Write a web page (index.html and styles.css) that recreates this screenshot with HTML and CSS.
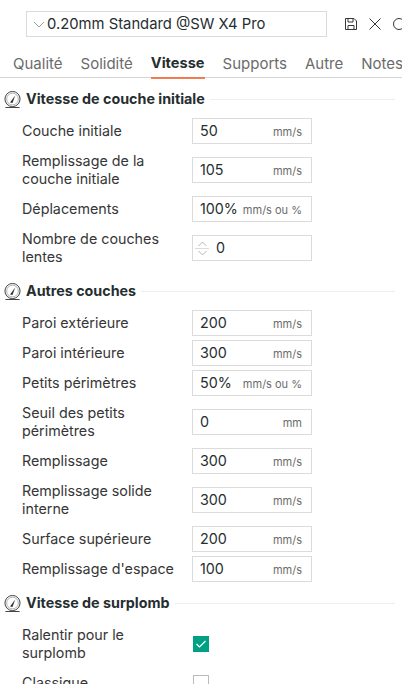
FILE: index.html
```html
<!DOCTYPE html>
<html lang="fr">
<head>
    <meta charset="UTF-8">
    <title>Vitesse</title>
    <link rel="stylesheet" href="styles.css">
</head>
<body>
    <svg class="defs" width="0" height="0">
        <symbol id="gauge" viewBox="0 0 18 18">
            <circle cx="9" cy="8.5" r="8" fill="none" stroke="#363636" stroke-width="1"/>
            <circle cx="9" cy="8.5" r="6.2" fill="none" stroke="#9a9a9a" stroke-width="0.8"/>
            <path d="M6.4 12.2 L12 4.4 L9 12.8 Z" fill="#363636"/>
            <path d="M1.5 17.5 H16.5" stroke="#363636" stroke-width="1"/>
        </symbol>
    </svg>

    <div class="topbar">
        <div class="preset">
            <svg class="chevron" width="12" height="7" viewBox="0 0 12 7"><path d="M1 1 L6 6 L11 1" fill="none" stroke="#a0a0a0"/></svg>
            <span>0.20mm Standard @SW X4 Pro</span>
        </div>
        <svg class="tool save" width="14" height="14" viewBox="0 0 14 14"><path d="M1.5 1.5 H10 L12.5 4 V12.5 H1.5 Z M4 1.5 V5 H9 V1.5 M4 12.5 V8.5 H10 V12.5" fill="none" stroke="#363636"/></svg>
        <svg class="tool" width="14" height="14" viewBox="0 0 14 14"><path d="M1.5 1.5 L12.5 12.5 M12.5 1.5 L1.5 12.5" fill="none" stroke="#363636"/></svg>
        <svg class="tool" width="14" height="14" viewBox="0 0 14 14"><circle cx="7" cy="7" r="5.5" fill="none" stroke="#363636"/></svg>
    </div>

    <div class="tabs">
        <span class="tab">Qualité</span>
        <span class="tab">Solidité</span>
        <span class="tab active">Vitesse</span>
        <span class="tab">Supports</span>
        <span class="tab">Autre</span>
        <span class="tab">Notes</span>
    </div>

    <div class="section">
        <div class="heading"><svg class="gauge"><use href="#gauge"/></svg><b>Vitesse de couche initiale</b><i></i></div>
        <div class="row"><label>Couche initiale</label><div class="field"><span class="val">50</span><span class="unit">mm/s</span></div></div>
        <div class="row tall"><label>Remplissage de la couche initiale</label><div class="field"><span class="val">105</span><span class="unit">mm/s</span></div></div>
        <div class="row"><label>Déplacements</label><div class="field"><span class="val">100%</span><span class="unit">mm/s ou %</span></div></div>
        <div class="row tall"><label>Nombre de couches lentes</label>
            <div class="field spin">
                <div class="arrows">
                    <svg width="11" height="6" viewBox="0 0 11 6"><path d="M1.5 5 L5.5 1 L9.5 5" fill="none" stroke="#b5b5b5"/></svg>
                    <span class="divider"></span>
                    <svg width="11" height="6" viewBox="0 0 11 6"><path d="M1.5 1 L5.5 5 L9.5 1" fill="none" stroke="#b5b5b5"/></svg>
                </div>
                <span class="val">0</span>
            </div>
        </div>
    </div>

    <div class="section">
        <div class="heading"><svg class="gauge"><use href="#gauge"/></svg><b>Autres couches</b><i></i></div>
        <div class="row"><label>Paroi extérieure</label><div class="field"><span class="val">200</span><span class="unit">mm/s</span></div></div>
        <div class="row"><label>Paroi intérieure</label><div class="field"><span class="val">300</span><span class="unit">mm/s</span></div></div>
        <div class="row"><label>Petits périmètres</label><div class="field"><span class="val">50%</span><span class="unit">mm/s ou %</span></div></div>
        <div class="row tall"><label>Seuil des petits périmètres</label><div class="field"><span class="val">0</span><span class="unit mm">mm</span></div></div>
        <div class="row"><label>Remplissage</label><div class="field"><span class="val">300</span><span class="unit">mm/s</span></div></div>
        <div class="row tall"><label>Remplissage solide interne</label><div class="field"><span class="val">300</span><span class="unit">mm/s</span></div></div>
        <div class="row"><label>Surface supérieure</label><div class="field"><span class="val">200</span><span class="unit">mm/s</span></div></div>
        <div class="row"><label>Remplissage d'espace</label><div class="field"><span class="val">100</span><span class="unit">mm/s</span></div></div>
    </div>

    <div class="section">
        <div class="heading"><svg class="gauge"><use href="#gauge"/></svg><b>Vitesse de surplomb</b><i></i></div>
        <div class="row tall"><label>Ralentir pour le surplomb</label>
            <span class="check on"><svg width="12" height="10" viewBox="0 0 12 10"><path d="M1.5 5 L4.5 8 L10.5 2" fill="none" stroke="#fff" stroke-width="1.2"/></svg></span>
        </div>
        <div class="row"><label>Classique</label><span class="check"></span></div>
    </div>
</body>
</html>
```

FILE: styles.css
```css
body {
    margin: 0;
    width: 402px;
    height: 684px;
    overflow: hidden;
    background-color: #fff;
    color: #363636;
    font-family: Inter, sans-serif;
    font-size: 14.3px;
}
.defs {
    display: block;
    height: 0;
}
.topbar {
    display: flex;
    align-items: center;
    height: 26px;
    padding: 11px 0 0 26px;
}
.preset {
    display: flex;
    flex: none;
    align-items: center;
    width: 301px;
    height: 26px;
    box-sizing: border-box;
    border: 1px solid #dbdbdb;
    padding-left: 6px;
    color: #262e30;
    font-size: 14.8px;
    white-space: nowrap;
}
.chevron {
    margin-right: 2px;
}
.tool {
    flex: none;
    margin-left: 10px;
}
.tool.save {
    margin-left: 17px;
}
.tabs {
    display: flex;
    gap: 18px;
    height: 41px;
    box-sizing: border-box;
    padding: 17px 0 0 13px;
    border-bottom: 1px solid #d5d5d5;
    font-size: 15px;
    white-space: nowrap;
}
.tab {
    flex: none;
    height: 23px;
    color: #6b6b6b;
}
.tab.active {
    border-bottom: 2px solid #f27b50;
    color: #262e30;
    font-size: 14.6px;
    font-weight: 700;
}
.section {
    display: flex;
    flex-direction: column;
    gap: 4px;
    margin-top: 8px;
}
.section:first-of-type {
    margin-top: 7px;
}
.heading {
    display: flex;
    align-items: center;
    height: 26px;
    margin-bottom: 2px;
    padding-left: 4px;
    color: #262e30;
}
.heading b {
    margin-bottom: 2px;
    white-space: nowrap;
}
.heading i {
    flex-grow: 1;
    height: 1px;
    margin: 0 7px 0 5px;
    background-color: #eeeeee;
}
.gauge {
    flex: none;
    width: 17px;
    height: 17px;
    margin-right: 5px;
}
.row {
    display: flex;
    align-items: center;
    height: 26px;
    padding-left: 22px;
}
.row.tall {
    height: 44px;
}
.row label {
    width: 160px;
    flex: none;
    margin-right: 10px;
    line-height: 18px;
}
.field {
    display: flex;
    align-items: center;
    justify-content: space-between;
    width: 120px;
    height: 26px;
    box-sizing: border-box;
    border: 1px solid #dbdbdb;
    padding: 0 9px 0 7px;
}
.val {
    margin-bottom: 2px;
    color: #262e30;
}
.unit {
    margin-top: 2px;
    color: #6b6b6b;
    font-size: 11px;
}
.spin {
    justify-content: flex-start;
    padding-left: 2px;
}
.arrows {
    display: flex;
    flex-direction: column;
    align-items: center;
    gap: 1px;
    width: 14px;
    margin-right: 7px;
}
.divider {
    width: 14px;
    height: 1px;
    background-color: #dbdbdb;
}
.check {
    display: flex;
    align-items: center;
    justify-content: center;
    width: 16px;
    height: 16px;
    box-sizing: border-box;
    border: 1px solid #bbbbbb;
    margin-left: 1px;
}
.check.on {
    border-color: #00a085;
    background-color: #00a085;
}
```
